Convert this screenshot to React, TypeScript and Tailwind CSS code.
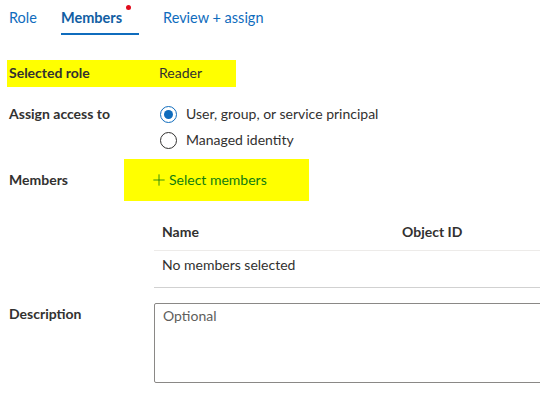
import { Plus } from 'lucide-react';

const font = { fontFamily: 'Lato, "Open Sans", sans-serif' };

function Radio({ checked, label }: { checked?: boolean; label: string }) {
  return (
    <div className="flex items-center h-[26px]">
      <span
        className={`w-[17px] h-[17px] rounded-full border flex items-center justify-center ${
          checked ? 'border-[#0f6cbd]' : 'border-[#323130]'
        }`}
      >
        {checked && <span className="w-[9px] h-[9px] rounded-full bg-[#0f6cbd]" />}
      </span>
      <span className="ml-[9px] text-[#323130]">{label}</span>
    </div>
  );
}

export default function App() {
  const tabs = [
    { label: 'Role', active: false },
    { label: 'Members', active: true },
    { label: 'Review + assign', active: false },
  ];

  return (
    <div
      className="w-[540px] h-[406px] bg-white overflow-hidden text-[14px] leading-[20px] text-[#323130]"
      style={font}
    >
      {/* Tabs */}
      <div className="flex h-[35px] pl-[9px] gap-[24px] text-[14.5px]">
        {tabs.map((t) => (
          <div
            key={t.label}
            className={`relative pt-[8px] h-[35px] ${
              t.active ? 'border-b-[2px] border-[#0f6cbd] pr-[17px] font-bold text-[#115ea3]' : 'text-[#0f6cbd]'
            }`}
          >
            {t.label}
            {t.active && (
              <span className="absolute right-[8px] top-[5px] w-[5px] h-[5px] rounded-full bg-[#e00b1c]" />
            )}
          </div>
        ))}
      </div>

      {/* Selected role */}
      <div className="mt-[25px] ml-[7px] w-[229px] h-[27px] bg-[#ffff00] flex items-center pb-[2px]">
        <span className="w-[152px] pl-[2px] font-bold">Selected role</span>
        <span>Reader</span>
      </div>

      {/* Assign access */}
      <div className="flex mt-[14px] pl-[9px]">
        <span className="w-[145px] pt-[3px] font-bold">Assign access to</span>
        <div className="pl-[6px]">
          <Radio checked label="User, group, or service principal" />
          <Radio label="Managed identity" />
        </div>
      </div>

      {/* Members */}
      <div className="flex items-center mt-[6px] pl-[9px] h-[42px]">
        <span className="w-[115px] font-bold">Members</span>
        <div className="h-[42px] w-[185px] bg-[#ffff00] flex items-center pl-[26px] text-[#107c10]">
          <Plus className="w-[18px] h-[18px]" strokeWidth={1.1} />
          <span className="ml-[1px]">Select members</span>
        </div>
      </div>

      {/* Table */}
      <div className="ml-[154px] mt-[20px]">
        <div className="flex h-[30px] pt-[1px] border-b border-[#edebe9] pl-[8px] font-bold">
          <span className="w-[240px]">Name</span>
          <span>Object ID</span>
        </div>
        <div className="h-[37px] pt-[4px] border-b border-[#d1d1d1] pl-[8px]">
          No members selected
        </div>
      </div>

      {/* Description */}
      <div className="flex mt-[15px] pl-[9px]">
        <span className="w-[145px] pt-[1px] font-bold">Description</span>
        <div className="flex-1 h-[80px] border border-[#8a8886] rounded-[2px] -mr-[4px] px-[8px] pt-[2px] text-[#605e5c]">
          Optional
        </div>
      </div>
    </div>
  );
}
